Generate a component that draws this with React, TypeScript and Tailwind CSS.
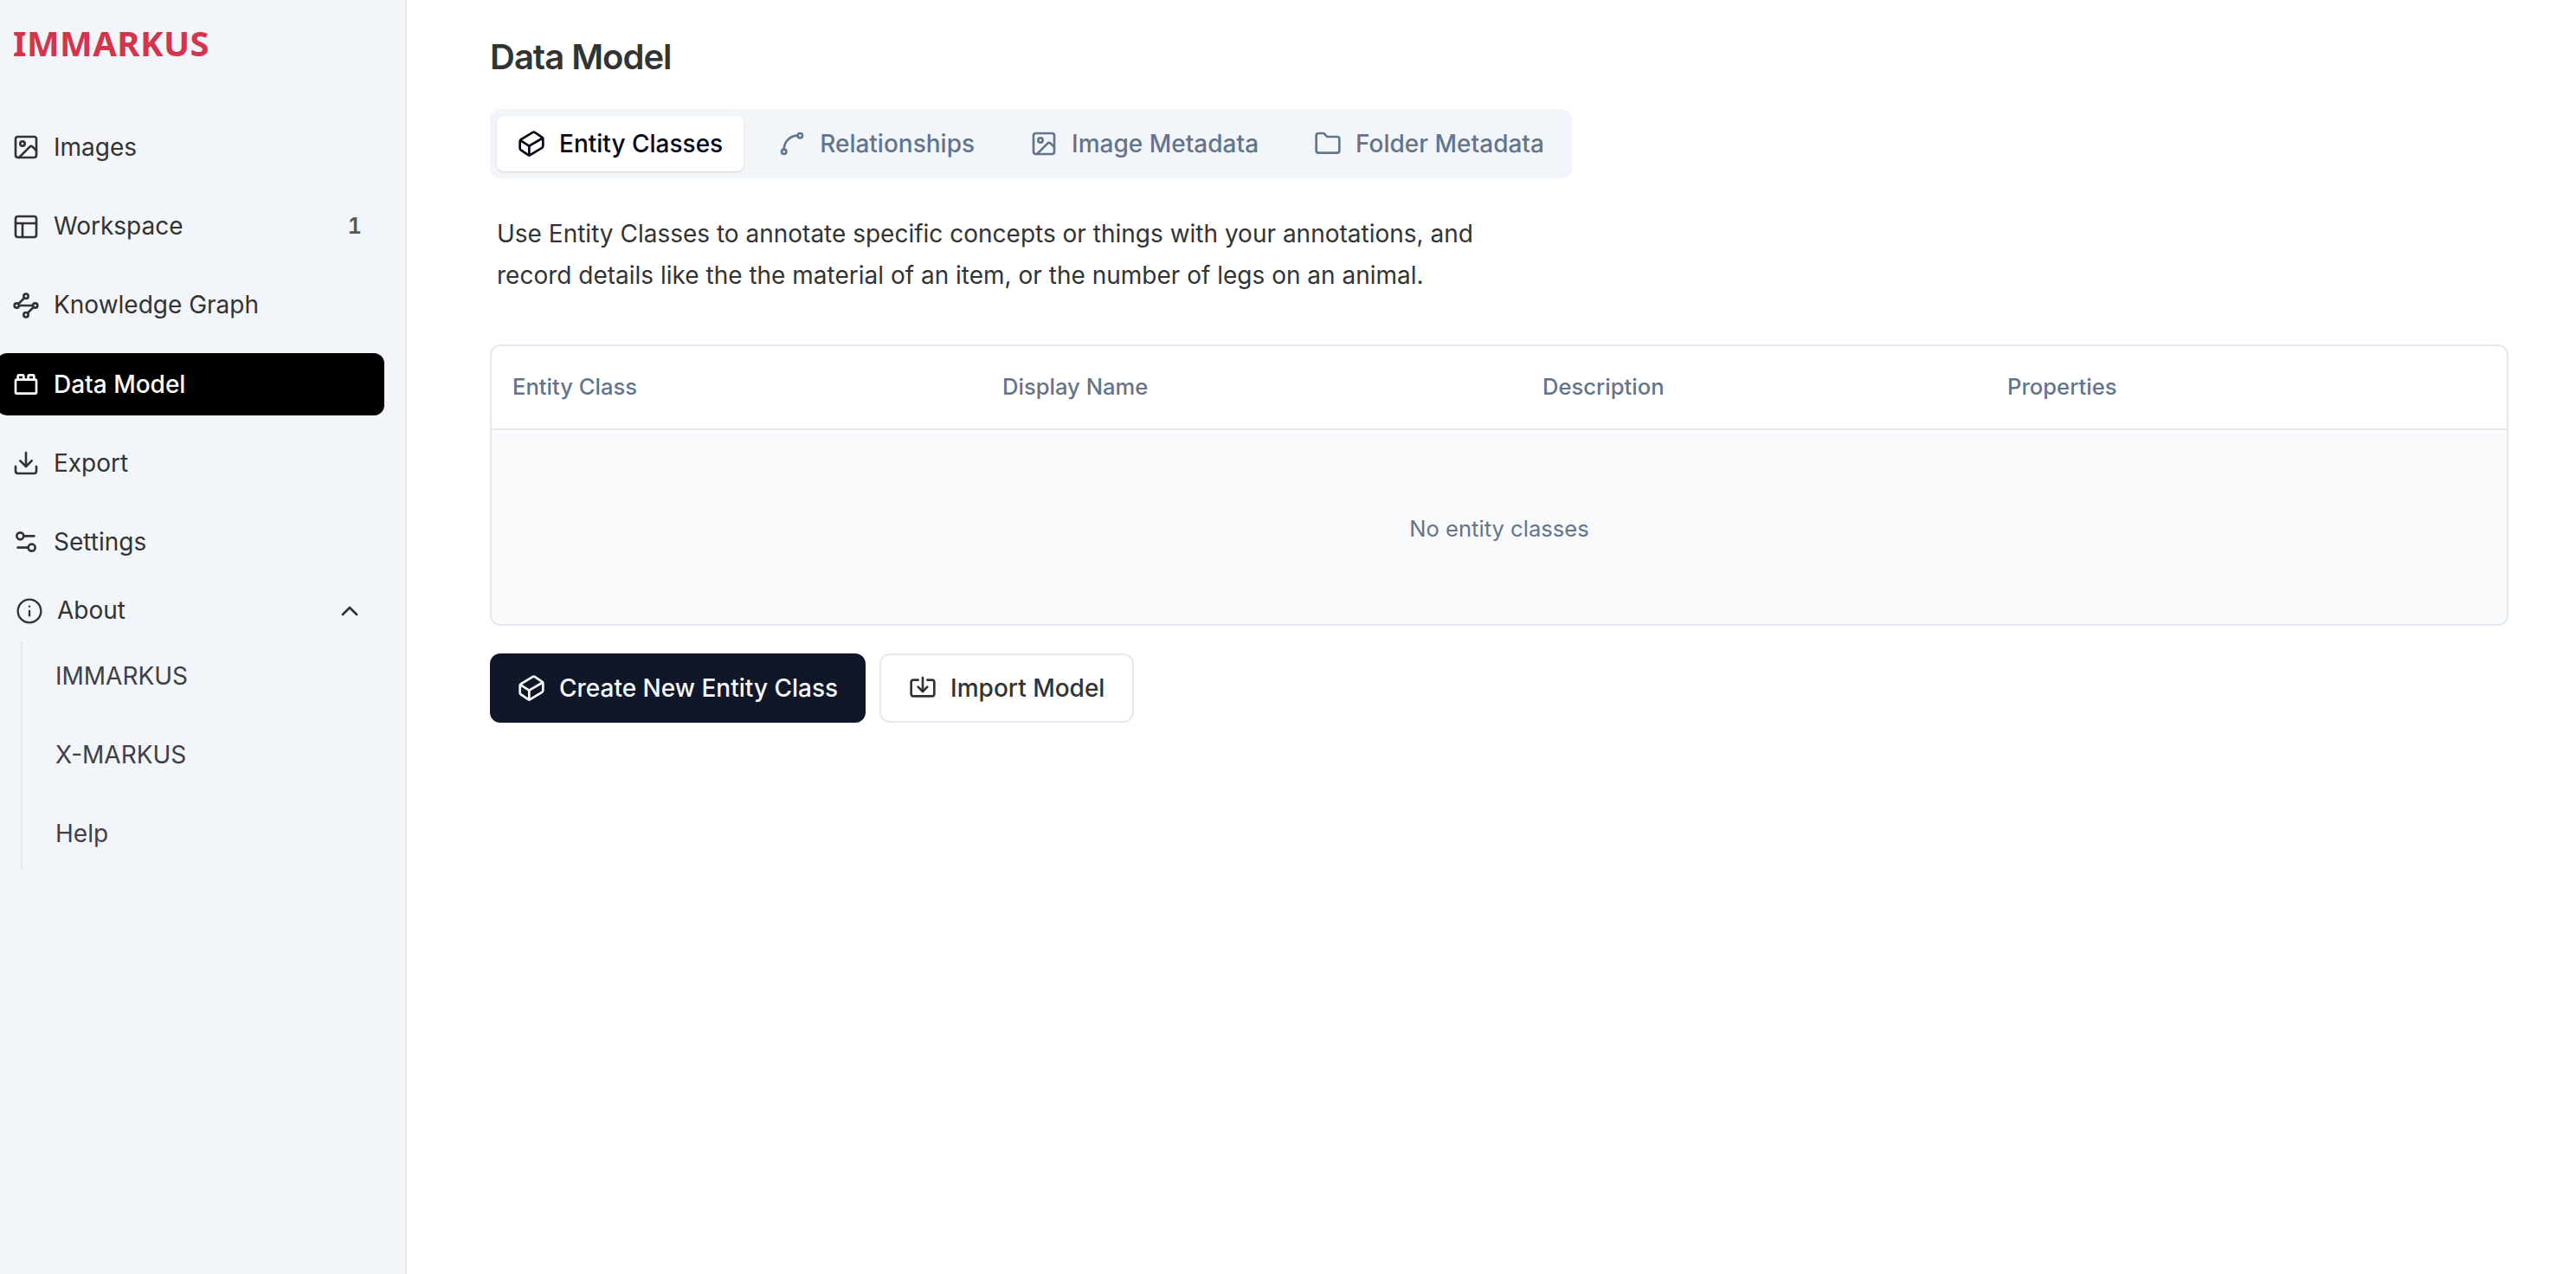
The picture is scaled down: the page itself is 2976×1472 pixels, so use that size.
import React from "react";
import { Image, PanelsTopLeft, ToyBrick, Download, Settings2, Info, ChevronUp, Spline, Folder } from "lucide-react";

interface IconProps {
  className?: string;
  strokeWidth?: number;
}

function GraphIcon({ className, strokeWidth = 2 }: IconProps) {
  return (
    <svg className={className} viewBox="0 0 24 24" fill="none" stroke="currentColor" strokeWidth={strokeWidth} strokeLinecap="round" strokeLinejoin="round">
      <path d="m10.586 5.414-5.172 5.172" />
      <path d="m18.586 13.414-5.172 5.172" />
      <path d="M6 12h12" />
      <circle cx="12" cy="20" r="2" />
      <circle cx="12" cy="4" r="2" />
      <circle cx="20" cy="12" r="2" />
      <circle cx="4" cy="12" r="2" />
    </svg>
  );
}

function CuboidIcon({ className, strokeWidth = 2 }: IconProps) {
  return (
    <svg className={className} viewBox="0 0 24 24" fill="none" stroke="currentColor" strokeWidth={strokeWidth} strokeLinecap="round" strokeLinejoin="round">
      <path d="m21.12 6.4-6.05-4.06a2 2 0 0 0-2.17-.05L2.95 8.41a2 2 0 0 0-.95 1.7v5.82a2 2 0 0 0 .88 1.66l6.05 4.07a2 2 0 0 0 2.17.05l9.95-6.12a2 2 0 0 0 .95-1.7V8.06a2 2 0 0 0-.88-1.66Z" />
      <path d="M10 22v-8L2.25 9.15" />
      <path d="m10 14 11.77-6.87" />
    </svg>
  );
}

function ImportIcon({ className, strokeWidth = 2 }: IconProps) {
  return (
    <svg className={className} viewBox="0 0 24 24" fill="none" stroke="currentColor" strokeWidth={strokeWidth} strokeLinecap="round" strokeLinejoin="round">
      <path d="M12 3v12" />
      <path d="m8 11 4 4 4-4" />
      <path d="M8 5H4a2 2 0 0 0-2 2v10a2 2 0 0 0 2 2h16a2 2 0 0 0 2-2V7a2 2 0 0 0-2-2h-4" />
    </svg>
  );
}

const NAV = [
  { label: "Images", icon: Image },
  { label: "Workspace", icon: PanelsTopLeft, count: 1 },
  { label: "Knowledge Graph", icon: GraphIcon },
  { label: "Data Model", icon: ToyBrick, active: true },
  { label: "Export", icon: Download },
  { label: "Settings", icon: Settings2 },
];

const TABS = [
  { label: "Entity Classes", icon: CuboidIcon, active: true },
  { label: "Relationships", icon: Spline },
  { label: "Image Metadata", icon: Image },
  { label: "Folder Metadata", icon: Folder },
];

const Sidebar = () => {
  return (
    <aside className="w-[470px] shrink-0 bg-[#f2f5fa] border-r-2 border-gray-200">
      <h1 className="h-[134.4px] pl-[15px] pt-[23px] font-['Noto_Sans',sans-serif] font-bold text-[40px] leading-[54px] tracking-[0.4px] text-[#d2354c]">IMMARKUS</h1>
      <nav className="flow-root -ml-1 mr-6">
        {NAV.map(({ label, icon: Icon, count, active }) => (
          <div
            key={label}
            className={`flex items-center h-[72px] mb-[19.2px] pl-[18px] pr-[26px] rounded-xl ${active ? "bg-black text-white font-medium" : ""}`}
          >
            <Icon className="w-8 h-8" strokeWidth={2} />
            <span className="ml-4">{label}</span>
            {count && <span className="ml-auto text-[25.6px] font-semibold tabular-nums text-[#57585a]">{count}</span>}
          </div>
        ))}
      </nav>
      <div className="flex items-center h-10 mt-1 pl-[18px] pr-12">
        <Info className="w-8 h-8" strokeWidth={1.75} />
        <span className="ml-4">About</span>
        <ChevronUp className="ml-auto w-8 h-8" strokeWidth={2} />
      </div>
      <ul className="ml-6 mt-4 h-[262px] border-l-2 border-gray-200 pl-[38px] text-[#3f4045]">
        <li className="h-[91.2px] pt-[17px]">IMMARKUS</li>
        <li className="h-[91.2px] pt-[17px]">X-MARKUS</li>
        <li className="pt-[17px]">Help</li>
      </ul>
    </aside>
  );
};

const App = () => {
  return (
    <div className="flex h-[1472px] w-[2976px] overflow-hidden bg-white font-['Inter',sans-serif] text-[28px] leading-[44.8px] text-[#333]">
      <Sidebar />
      <main className="flex-1 pl-24 pr-[78px] pt-10">
        <h2 className="text-[40px] leading-[52px] font-semibold tracking-[-1px]">Data Model</h2>
        <div className="mt-[34px] flex w-[1250px] h-20 items-center gap-4 rounded-xl bg-[#f2f5fa] px-2 text-[#64748b] font-medium">
          {TABS.map(({ label, icon: Icon, active }) => (
            <div
              key={label}
              className={`flex shrink-0 items-center h-16 px-6 rounded-lg whitespace-nowrap ${active ? "bg-white text-[#020617] shadow-sm" : ""}`}
            >
              <Icon className="w-8 h-8" strokeWidth={2} />
              <span className="ml-4">{label}</span>
            </div>
          ))}
        </div>
        <p className="ml-2 mt-10 w-[1160px] leading-[48px]">
          Use Entity Classes to annotate specific concepts or things with your annotations, and record details like the the material of an item, or the number of legs on an animal.
        </p>
        <div className="mt-14 h-[325px] rounded-xl border-2 border-[#e2e8f0] overflow-hidden">
          <div className="flex h-[97px] items-center border-b-2 border-[#e2e8f0] pl-6 text-[25.6px] font-medium text-[#64748b]">
            <div className="w-[566px]">Entity Class</div>
            <div className="w-[624px]">Display Name</div>
            <div className="w-[537px]">Description</div>
            <div>Properties</div>
          </div>
          <div className="flex mt-0.5 h-[222px] items-center justify-center bg-[#f8fafc] pt-0.5 text-[25.6px] text-[#64748b]">No entity classes</div>
        </div>
        <div className="mt-8 flex gap-4 font-medium">
          <button className="flex items-center h-20 px-8 rounded-xl bg-[#101729] text-[#f8fafc]">
            <CuboidIcon className="w-8 h-8" strokeWidth={2} />
            <span className="ml-4">Create New Entity Class</span>
          </button>
          <button className="flex items-center h-20 px-8 rounded-xl border-2 border-[#e2e8f0]">
            <ImportIcon className="w-8 h-8" strokeWidth={2} />
            <span className="ml-4">Import Model</span>
          </button>
        </div>
      </main>
    </div>
  );
};

export default App;
